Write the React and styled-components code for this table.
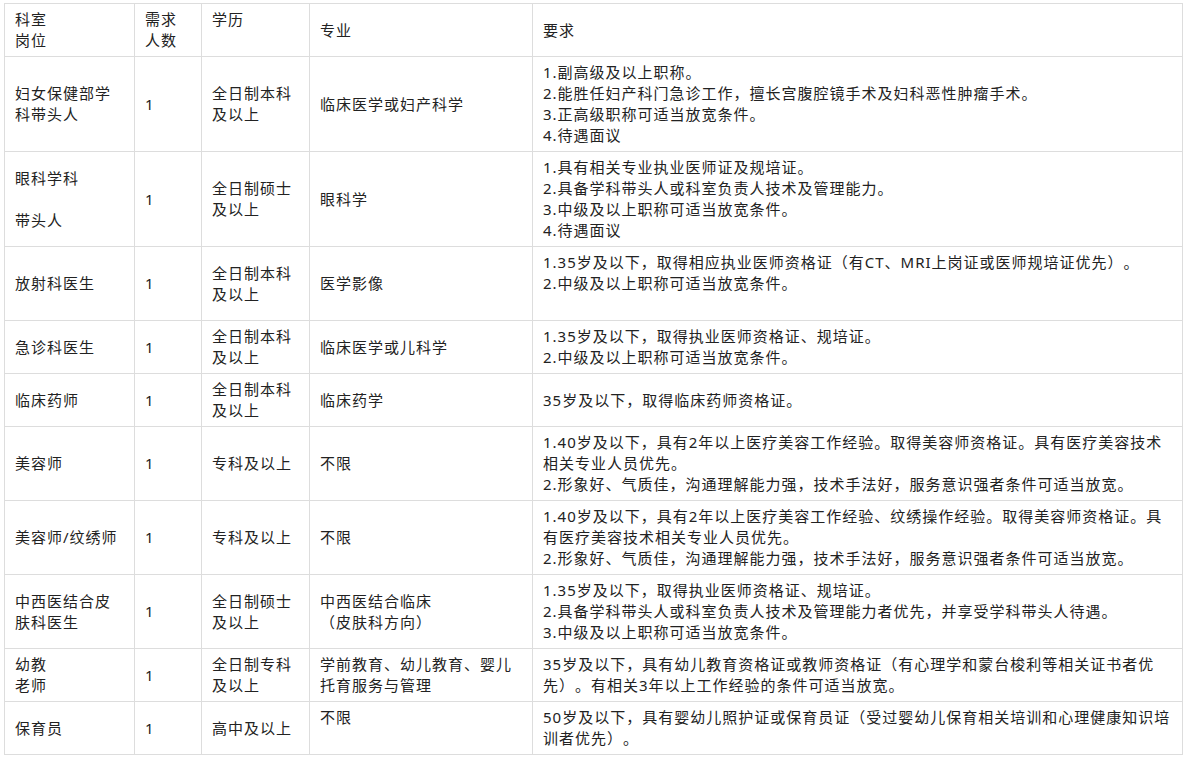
import React from "react";
import styled, { createGlobalStyle } from "styled-components";

const GlobalStyle = createGlobalStyle`
  html, body {
    margin: 0;
    padding: 0;
    background: #ffffff;
  }
  body {
    font-family: "Noto Sans", "Noto Sans CJK SC", sans-serif;
  }
`;

const Page = styled.div`
  padding: 3px 0 0 4px;
`;

const Table = styled.table`
  border-collapse: collapse;
  table-layout: fixed;
  width: 1178px;
  font-size: 15px;
  letter-spacing: 1px;
  line-height: 21px;
  color: #222222;
  text-spacing-trim: space-all;
`;

const Col = styled.col`
  width: ${(p) => p.$w}px;
`;

const HeadCell = styled.th`
  border: 1px solid #dddddd;
  padding: 5px ${(p) => (p.$wide ? 8 : 10)}px 5px 10px;
  font-weight: normal;
  text-align: left;
  vertical-align: middle;
`;

const Cell = styled.td`
  border: 1px solid #dddddd;
  padding: 5px ${(p) => (p.$wide ? 8 : 10)}px 5px 10px;
  text-align: left;
  vertical-align: middle;
`;

const Line = styled.div`
  min-height: 21px;
`;

const Lines = ({ items }) =>
  items.map((t, i) => <Line key={i}>{t}</Line>);

const header = [
  ["科室", "岗位"],
  ["需求人数"],
  ["学历", ""],
  ["专业"],
  ["要求"],
];

const rows = [
  {
    post: ["妇女保健部学科带头人"],
    edu: ["全日制本科及以上"],
    major: ["临床医学或妇产科学"],
    req: [
      "1.副高级及以上职称。",
      "2.能胜任妇产科门急诊工作，擅长宫腹腔镜手术及妇科恶性肿瘤手术。",
      "3.正高级职称可适当放宽条件。",
      "4.待遇面议",
    ],
  },
  {
    post: ["眼科学科", "", "带头人"],
    edu: ["全日制硕士及以上"],
    major: ["眼科学"],
    req: [
      "1.具有相关专业执业医师证及规培证。",
      "2.具备学科带头人或科室负责人技术及管理能力。",
      "3.中级及以上职称可适当放宽条件。",
      "4.待遇面议",
    ],
  },
  {
    post: ["放射科医生"],
    edu: ["全日制本科及以上"],
    major: ["医学影像"],
    req: [
      "1.35岁及以下，取得相应执业医师资格证（有CT、MRI上岗证或医师规培证优先）。",
      "2.中级及以上职称可适当放宽条件。",
      "",
    ],
  },
  {
    post: ["急诊科医生"],
    edu: ["全日制本科及以上"],
    major: ["临床医学或儿科学"],
    req: [
      "1.35岁及以下，取得执业医师资格证、规培证。",
      "2.中级及以上职称可适当放宽条件。",
    ],
  },
  {
    post: ["临床药师"],
    edu: ["全日制本科及以上"],
    major: ["临床药学"],
    req: ["35岁及以下，取得临床药师资格证。"],
  },
  {
    post: ["美容师"],
    edu: ["专科及以上"],
    major: ["不限"],
    req: [
      "1.40岁及以下，具有2年以上医疗美容工作经验。取得美容师资格证。具有医疗美容技术相关专业人员优先。",
      "2.形象好、气质佳，沟通理解能力强，技术手法好，服务意识强者条件可适当放宽。",
    ],
  },
  {
    post: ["美容师/纹绣师"],
    edu: ["专科及以上"],
    major: ["不限"],
    req: [
      "1.40岁及以下，具有2年以上医疗美容工作经验、纹绣操作经验。取得美容师资格证。具有医疗美容技术相关专业人员优先。",
      "2.形象好、气质佳，沟通理解能力强，技术手法好，服务意识强者条件可适当放宽。",
    ],
  },
  {
    post: ["中西医结合皮肤科医生"],
    edu: ["全日制硕士及以上"],
    major: ["中西医结合临床", "（皮肤科方向）"],
    req: [
      "1.35岁及以下，取得执业医师资格证、规培证。",
      "2.具备学科带头人或科室负责人技术及管理能力者优先，并享受学科带头人待遇。",
      "3.中级及以上职称可适当放宽条件。",
    ],
  },
  {
    post: ["幼教", "老师"],
    edu: ["全日制专科及以上"],
    major: ["学前教育、幼儿教育、婴儿托育服务与管理"],
    req: [
      "35岁及以下，具有幼儿教育资格证或教师资格证（有心理学和蒙台梭利等相关证书者优先）。有相关3年以上工作经验的条件可适当放宽。",
    ],
  },
  {
    post: ["保育员"],
    edu: ["高中及以上"],
    major: ["不限", ""],
    req: [
      "50岁及以下，具有婴幼儿照护证或保育员证（受过婴幼儿保育相关培训和心理健康知识培训者优先）。",
    ],
  },
];

const widths = [130, 67, 108, 223, 650];

export default function App() {
  return (
    <>
      <GlobalStyle />
      <Page>
        <Table>
          <colgroup>
            {widths.map((w, i) => (
              <Col key={i} $w={w} />
            ))}
          </colgroup>
          <thead>
            <tr>
              {header.map((h, i) => (
                <HeadCell key={i} $wide={i === 4}>
                  <Lines items={h} />
                </HeadCell>
              ))}
            </tr>
          </thead>
          <tbody>
            {rows.map((r, i) => (
              <tr key={i}>
                <Cell>
                  <Lines items={r.post} />
                </Cell>
                <Cell>1</Cell>
                <Cell>
                  <Lines items={r.edu} />
                </Cell>
                <Cell>
                  <Lines items={r.major} />
                </Cell>
                <Cell $wide>
                  <Lines items={r.req} />
                </Cell>
              </tr>
            ))}
          </tbody>
        </Table>
      </Page>
    </>
  );
}
